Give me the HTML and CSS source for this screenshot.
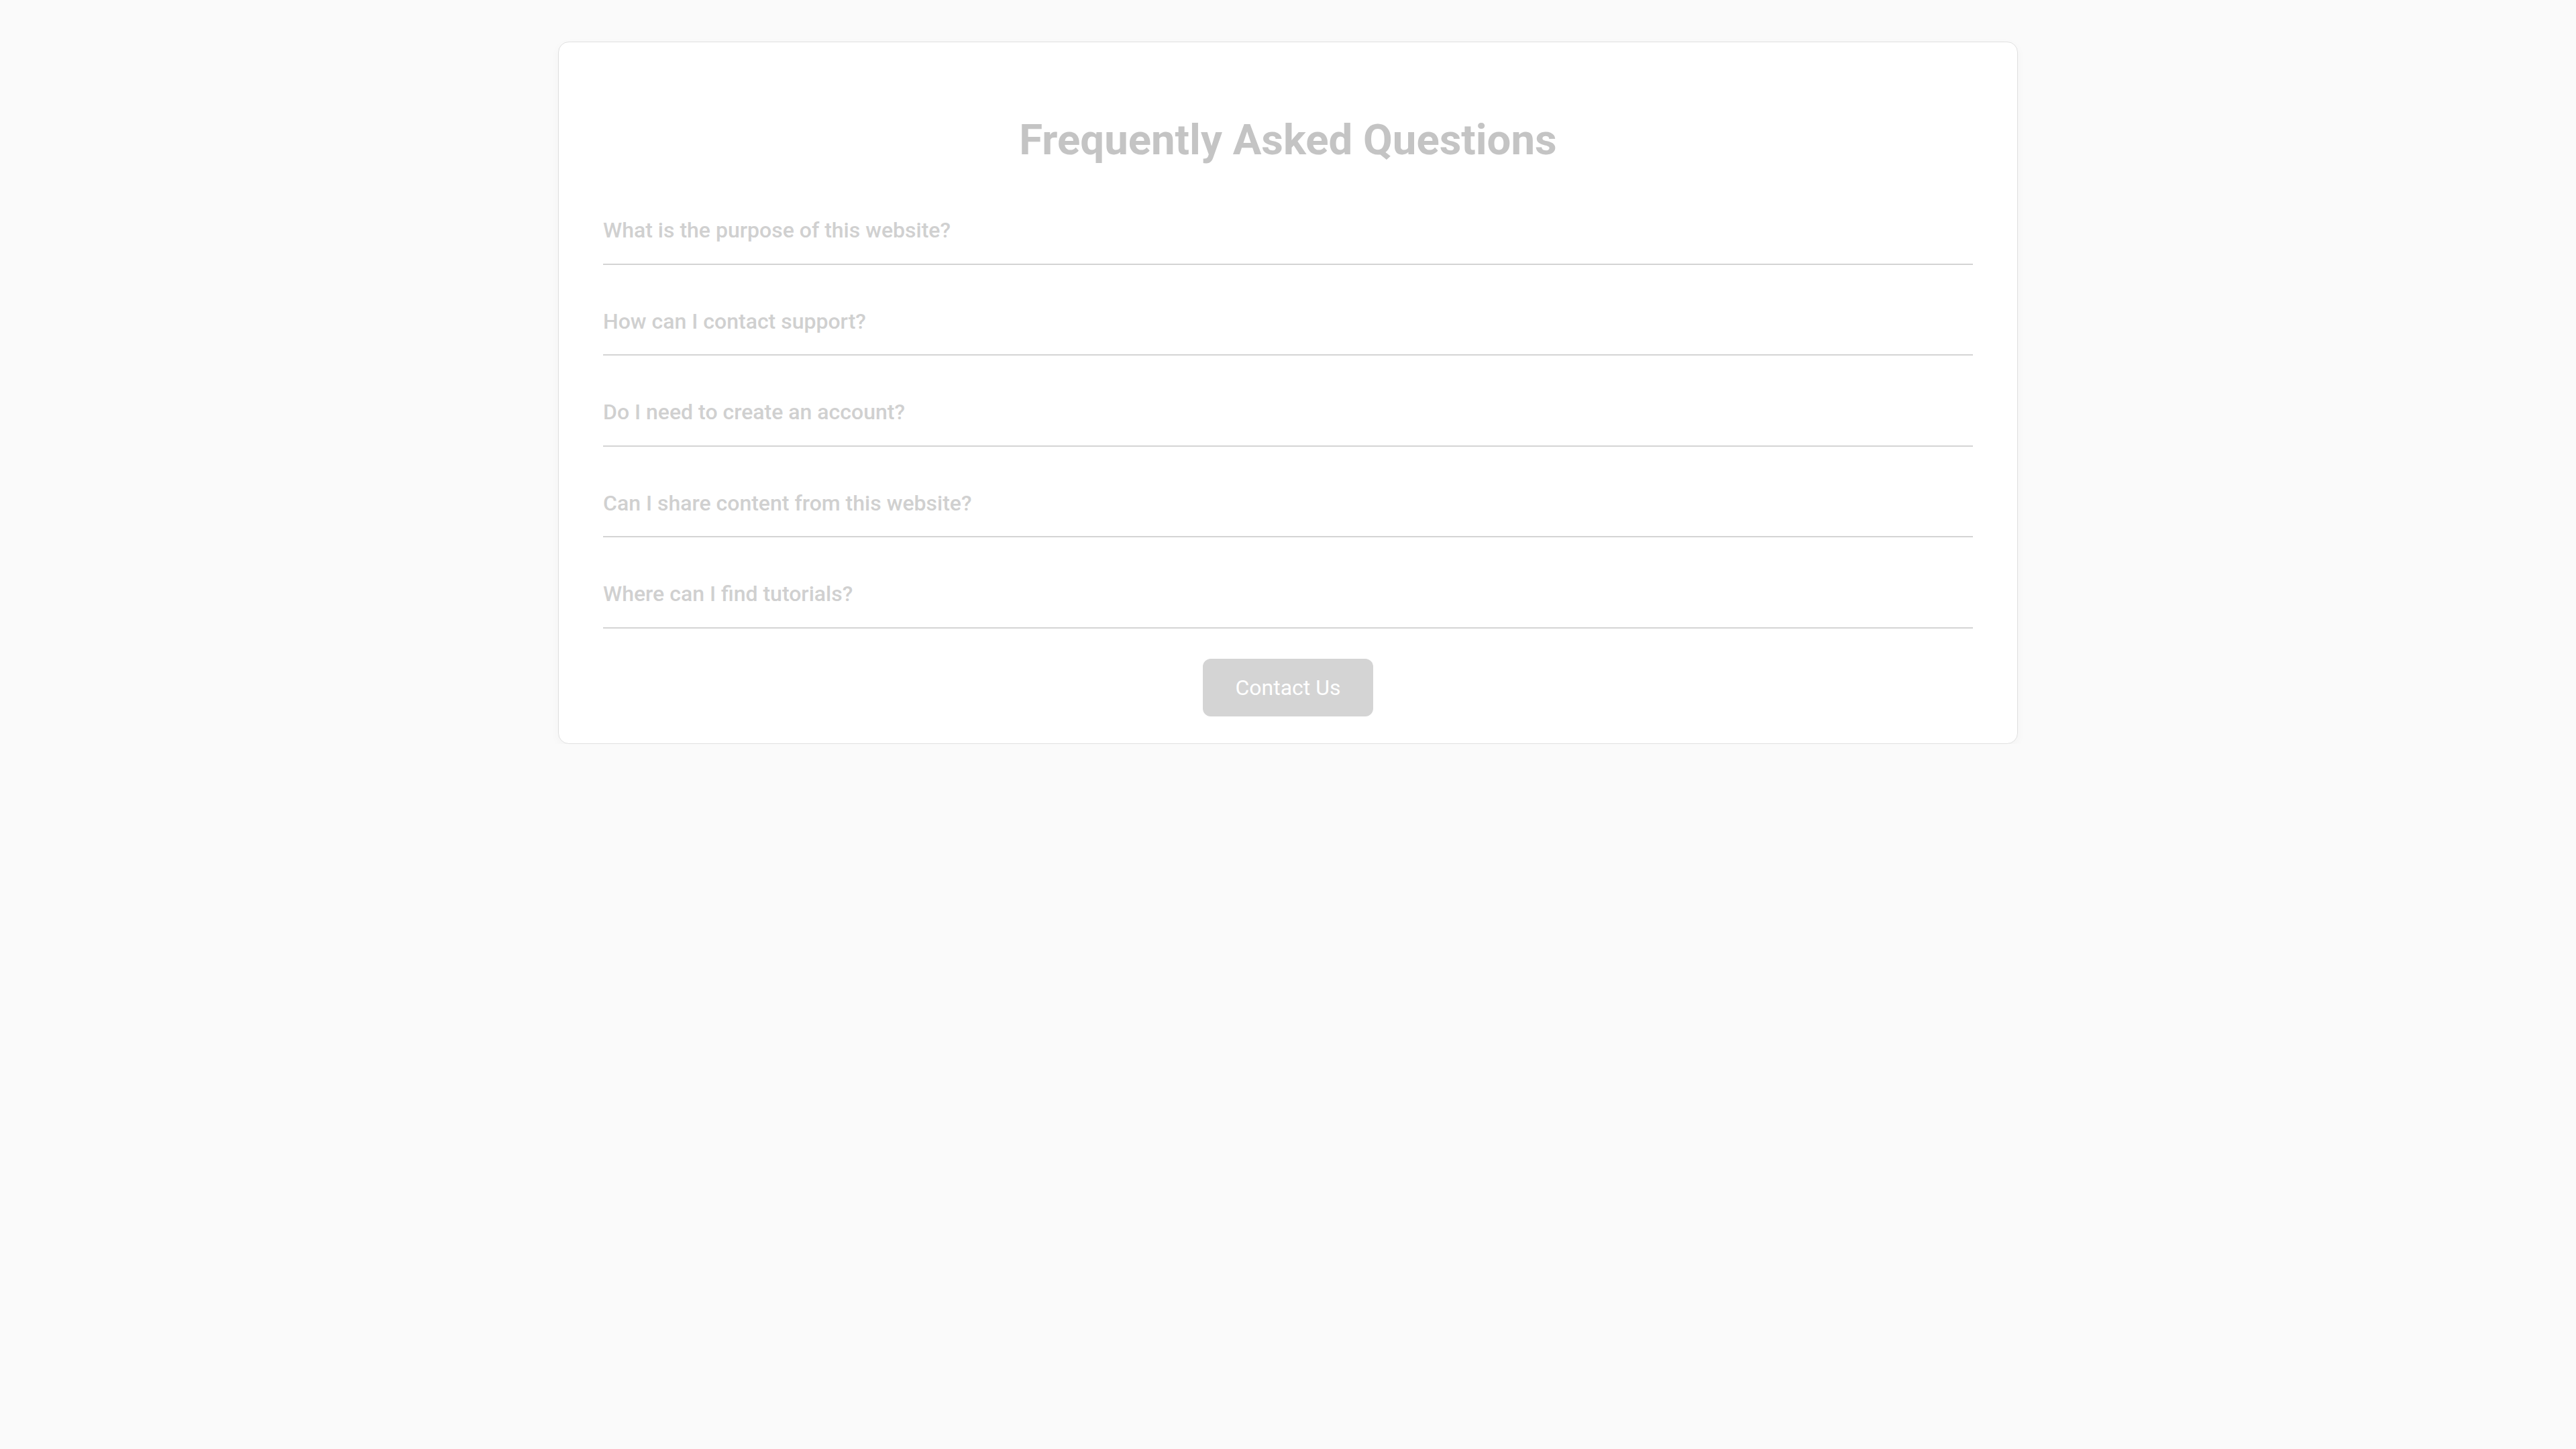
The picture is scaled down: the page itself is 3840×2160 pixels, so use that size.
FILE: index.html
```html
<!DOCTYPE html>
<html lang="en">
<head>
<meta charset="utf-8">
<title>FAQ</title>
<link rel="stylesheet" href="styles.css">
</head>
<body>
  <main class="card">
    <h1 class="title">Frequently Asked Questions</h1>
    <ul class="faq-list">
      <li class="faq-item">What is the purpose of this website?</li>
      <li class="faq-item">How can I contact support?</li>
      <li class="faq-item">Do I need to create an account?</li>
      <li class="faq-item">Can I share content from this website?</li>
      <li class="faq-item">Where can I find tutorials?</li>
    </ul>
    <div class="actions">
      <button class="contact-btn" type="button">Contact Us</button>
    </div>
  </main>
</body>
</html>
```
FILE: styles.css
```css
html, body {
  margin: 0;
  padding: 0;
  background: #fafafa;
  font-family: Roboto, "Liberation Sans", Arial, sans-serif;
}

body {
  padding-top: 62px;
}

.card {
  box-sizing: border-box;
  width: 2176px;
  margin: 0 auto;
  padding: 42px 66px 40px 66px;
  background: #ffffff;
  border: 1px solid #e0e0e0;
  border-radius: 16px;
  box-shadow: 0 4px 14px rgba(0, 0, 0, 0.03);
}

.title {
  margin: 66px 0 48px;
  text-align: center;
  font-size: 63.5px;
  font-weight: 700;
  line-height: 76px;
  color: #c4c4c4;
}

.faq-list {
  list-style: none;
  margin: 0;
  padding: 0;
}

.faq-item {
  padding: 30px 2px 30px 0;
  margin-bottom: 36px;
  border-bottom: 2px solid #d4d4d4;
  font-size: 32px;
  font-weight: 500;
  line-height: 37.5px;
  color: #d0d0d0;
}

.actions {
  display: flex;
  justify-content: center;
  padding-top: 9px;
}

.contact-btn {
  padding: 24px 48px;
  border: none;
  border-radius: 12px;
  background: #d4d4d4;
  color: #ffffff;
  font-family: Roboto, "Liberation Sans", Arial, sans-serif;
  font-size: 32px;
  font-weight: 400;
  line-height: 38px;
}
```
